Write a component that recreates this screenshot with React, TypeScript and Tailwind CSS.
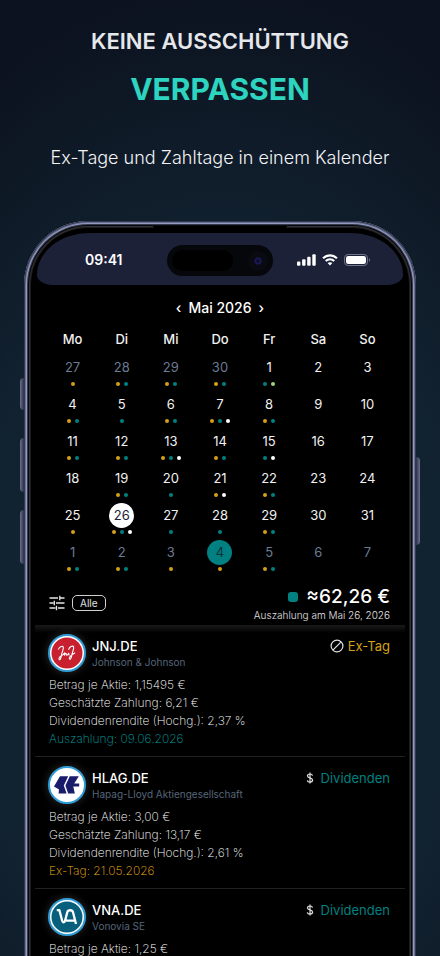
import React from "react";

type Dot = "y" | "t" | "w" | "g";
type Day = { n: number; dots?: string; out?: boolean; mark?: "today" | "pay" };

const dotColor: Record<Dot, string> = {
  y: "bg-[#d4a017]",
  t: "bg-[#008080]",
  w: "bg-white",
  g: "bg-[#a5cf7a]",
};

const weekdays = ["Mo", "Di", "Mi", "Do", "Fr", "Sa", "So"];

const days: Day[] = [
  { n: 27, dots: "y", out: true },
  { n: 28, dots: "yt", out: true },
  { n: 29, dots: "yt", out: true },
  { n: 30, dots: "yt", out: true },
  { n: 1, dots: "tg" },
  { n: 2 },
  { n: 3 },
  { n: 4, dots: "yt" },
  { n: 5, dots: "t" },
  { n: 6, dots: "yt" },
  { n: 7, dots: "ytw" },
  { n: 8, dots: "yt" },
  { n: 9 },
  { n: 10 },
  { n: 11, dots: "yt" },
  { n: 12, dots: "yt" },
  { n: 13, dots: "ytw" },
  { n: 14, dots: "yt" },
  { n: 15, dots: "tw" },
  { n: 16 },
  { n: 17 },
  { n: 18 },
  { n: 19, dots: "yt" },
  { n: 20, dots: "t" },
  { n: 21, dots: "yw" },
  { n: 22, dots: "yt" },
  { n: 23 },
  { n: 24 },
  { n: 25, dots: "y" },
  { n: 26, dots: "ytw", mark: "today" },
  { n: 27, dots: "t" },
  { n: 28, dots: "t" },
  { n: 29, dots: "yt" },
  { n: 30 },
  { n: 31 },
  { n: 1, dots: "yt", out: true },
  { n: 2, dots: "yt", out: true },
  { n: 3, dots: "y", out: true },
  { n: 4, dots: "y", out: true, mark: "pay" },
  { n: 5, dots: "yt", out: true },
  { n: 6, out: true },
  { n: 7, out: true },
];

function dayTone(d: Day) {
  if (d.mark === "today") return "bg-white text-[#1c2138]";
  if (d.mark === "pay") return "bg-[#008080] text-[#10323c]";
  return d.out ? "text-[#6b7c93]" : "text-[#f1f1f1]";
}

function DayCell({ day }: { day: Day }) {
  return (
    <button type="button" className="flex flex-col items-center gap-0.5">
      <span
        className={`flex size-[25px] items-center justify-center rounded-full text-[13px] leading-none ${dayTone(day)}`}
      >
        {day.n}
      </span>
      <span className="flex h-1 gap-1">
        {(day.dots ?? "").split("").map((k, i) => (
          <i key={i} className={`size-1 rounded-full ${dotColor[k as Dot]}`} />
        ))}
      </span>
    </button>
  );
}

function SignalIcon() {
  return (
    <svg width="19" height="12" viewBox="0 0 19 12" fill="#fff" aria-hidden="true">
      <rect x="0" y="7.5" width="3.4" height="4.2" rx="1" />
      <rect x="5.1" y="5.2" width="3.4" height="6.5" rx="1" />
      <rect x="10.2" y="2.8" width="3.4" height="8.9" rx="1" />
      <rect x="15.3" y="0.2" width="3.4" height="11.5" rx="1" />
    </svg>
  );
}

function WifiIcon() {
  return (
    <svg width="16" height="12" viewBox="0 0 16 12" fill="none" stroke="#fff" aria-hidden="true">
      <path d="M1 4.2C5 .4 11 .4 15 4.2" strokeWidth="2.1" />
      <path d="M3.7 7C6.2 4.8 9.8 4.8 12.3 7" strokeWidth="2" />
      <path d="M8 11.6 5.6 9.1C7 7.9 9 7.9 10.4 9.1Z" fill="#fff" stroke="none" />
    </svg>
  );
}

function BatteryIcon() {
  return (
    <svg width="27" height="12" viewBox="0 0 27 12" fill="none" aria-hidden="true">
      <rect x=".5" y=".5" width="23" height="11" rx="3.6" stroke="#73778a" />
      <rect x="2" y="2" width="20" height="8" rx="2.3" fill="#fff" />
      <path d="M25 4.2c1.4.5 1.4 3.1 0 3.6Z" fill="#73778a" />
    </svg>
  );
}

function TuneIcon() {
  return (
    <svg width="16" height="16" viewBox="0 0 16 16" stroke="#e6e6e6" strokeWidth="1.3" aria-hidden="true">
      <path d="M.5 3H9M11 3h4.5M10.8.7v4.6M.5 8h4M7 8h8.5M5.3 5.7v4.6M.5 13h6M9 13h6.5M7.5 10.7v4.6" />
    </svg>
  );
}

function JnjLogo() {
  return (
    <svg viewBox="0 0 34 34" className="size-full" aria-hidden="true">
      <circle cx="17" cy="17" r="15.5" fill="#c9202f" />
      <g fill="none" stroke="#fff" strokeWidth="1.1" strokeLinecap="round" strokeLinejoin="round">
        <path d="M8.6 13.2C9 10.8 12.4 9.6 13.3 11c.8 1.6-1.6 5.5-1.9 8.4-.2 2.4-1.3 5-2.2 4.2-1-1 .8-3.6 4.5-5.4" />
        <path d="M13.6 18.4c.5-1.5 1.4-2.4 1.2-.8l-.3 1.6c.5-1.3 1.7-2.5 1.8-1.2.1 1.5.7 1.7 1.5.5l.9-1.2.4 1.7" />
        <path d="M18.8 13.4c.4-2.6 4-4.2 4.8-2.6.7 1.8-1.5 5.6-1.8 8.2-.3 2.6-1.4 4.9-2.3 4.1-1-1 .9-3.6 5.2-6" />
      </g>
    </svg>
  );
}

function HapagLogo() {
  return (
    <svg viewBox="0 0 34 34" className="size-full" aria-hidden="true">
      <path d="M10 8.2h8.2L13.8 17.500 16.600 25.500H8.600L9 21.500 4 18.500Z" fill="#181c6b" />
      <path d="M19.800 8.200H28.800L24.200 15.600H29.200V18.400H23.300L24.800 25.500H18.200L15.400 17.500Z" fill="#181c6b" />
    </svg>
  );
}

function VonoviaLogo() {
  return (
    <svg viewBox="0 0 34 34" className="size-full" aria-hidden="true">
      <circle cx="17" cy="17" r="15.5" fill="#075f7b" />
      <path
        d="M6.8 10.2h2.6l2.7 10.3c.6 2.3 2.4 2.3 3 .1l2.2-8.4c.7-2.6 5-2.6 5.7 0L26 24M16.2 20.7h8.6"
        fill="none"
        stroke="#fff"
        strokeWidth="2.3"
        strokeLinejoin="round"
      />
    </svg>
  );
}

function BanIcon() {
  return (
    <svg width="14" height="14" viewBox="0 0 14 14" fill="none" stroke="#e0e0e0" strokeWidth="1.2" aria-hidden="true">
      <circle cx="7" cy="7" r="5.9" />
      <path d="M2.9 11.1 11.1 2.9" />
    </svg>
  );
}

function DollarIcon() {
  return (
    <svg width="8" height="14" viewBox="0 0 8 14" fill="none" stroke="#e0e0e0" strokeWidth="1.2" aria-hidden="true">
      <path d="M4 1.5v11M6.5 4.7C6.3 3.6 5.4 3 4 3S1.5 3.7 1.5 4.9C1.5 7.3 6.6 6.5 6.6 9.1c0 1.3-1.1 2-2.6 2S1.5 10.5 1.3 9.3" />
    </svg>
  );
}

type Item = {
  ticker: string;
  company: string;
  logo: React.ReactNode;
  kind: "ex" | "div";
  lines: string[];
  date?: string;
};

const items: Item[] = [
  {
    ticker: "JNJ.DE",
    company: "Johnson & Johnson",
    logo: <JnjLogo />,
    kind: "ex",
    lines: ["Betrag je Aktie: 1,15495 €", "Geschätzte Zahlung: 6,21 €", "Dividendenrendite (Hochg.): 2,37 %"],
    date: "Auszahlung: 09.06.2026",
  },
  {
    ticker: "HLAG.DE",
    company: "Hapag-Lloyd Aktiengesellschaft",
    logo: <HapagLogo />,
    kind: "div",
    lines: ["Betrag je Aktie: 3,00 €", "Geschätzte Zahlung: 13,17 €", "Dividendenrendite (Hochg.): 2,61 %"],
    date: "Ex-Tag: 21.05.2026",
  },
  {
    ticker: "VNA.DE",
    company: "Vonovia SE",
    logo: <VonoviaLogo />,
    kind: "div",
    lines: ["Betrag je Aktie: 1,25 €"],
  },
];

function PayoutItem({ item }: { item: Item }) {
  const ex = item.kind === "ex";
  return (
    <li className="border-b border-[#202020] pt-[9px] pr-[15px] pb-2 pl-[14px]">
      <div className="flex items-start">
        <div className="-ml-px flex size-[38px] shrink-0 items-center justify-center rounded-full border-2 border-[#2f9bd6] bg-white shadow-[0_0_8px_#ffffff30]">
          {item.logo}
        </div>
        <div className="ml-1.5 flex-1 pt-0.5">
          <h2 className="text-[13px] leading-5 font-medium text-white">{item.ticker}</h2>
          <p className="text-[10px] leading-3 text-[#56657a]">{item.company}</p>
        </div>
        <p
          className={`flex items-center pt-0.5 text-[13px] leading-5 ${ex ? "gap-1 text-[#d4a017]" : "gap-[7px] text-[#008080]"}`}
        >
          {ex ? <BanIcon /> : <DollarIcon />}
          {ex ? "Ex-Tag" : "Dividenden"}
        </p>
      </div>
      <div className="mt-1 text-[12px] leading-[18px] font-extralight text-white">
        {item.lines.map((line) => (
          <p key={line}>{line}</p>
        ))}
        {item.date && <p className={ex ? "text-[#00a0a0]" : "text-[#f0b41a]"}>{item.date}</p>}
      </div>
    </li>
  );
}

function StatusBar() {
  return (
    <div className="relative mx-0.5 flex h-[52px] items-center justify-between rounded-[52px_52px_16px_16px/42px_42px_10px_10px] bg-[#1c2138] pt-0.5 pr-8 pl-12">
      <span className="text-[14px] leading-5 font-semibold text-white">09:41</span>
      <div className="absolute top-3 left-1/2 flex h-[31px] w-[106px] -translate-x-1/2 items-center justify-between rounded-full bg-[#06070b] px-[5px]">
        <span className="h-[21px] w-[61px] rounded-full bg-black" />
        <span className="flex size-5 items-center justify-center rounded-full bg-[#090a12]">
          <span className="size-2 rounded-full bg-[radial-gradient(circle,#0c0c2c_20%,#1a1c60_50%,#0a0a18_75%)]" />
        </span>
      </div>
      <div className="flex items-center gap-1.5">
        <SignalIcon />
        <WifiIcon />
        <BatteryIcon />
      </div>
    </div>
  );
}

export default function App() {
  return (
    <main className="flex h-dvh flex-col overflow-hidden bg-[radial-gradient(ellipse_100%_68%_at_50%_66%,#122a36_0%,#11212f_60%,#0c121f_100%)] font-['Inter','Liberation_Sans',sans-serif]">
      <header className="pt-[27px] text-center">
        <h1>
          <span className="block text-[22px] leading-7 font-semibold text-[#e5e7eb]">KEINE AUSSCHÜTTUNG</span>
          <span className="mt-3.5 block text-[30px] leading-10 font-bold text-[#2dd4bf]">VERPASSEN</span>
        </h1>
        <p className="mt-[37px] text-[18px] leading-6 font-light text-[#f3f4f6]">
          Ex-Tage und Zahltage in einem Kalender
        </p>
      </header>

      <section className="relative mx-6 mt-[51px] shrink-0">
        <span className="absolute top-[157px] -left-1 h-8 w-1 rounded-l-sm bg-linear-to-r from-[#6c7191] to-[#2c3048]" />
        <span className="absolute top-[217px] -left-1 h-[54px] w-1 rounded-l-sm bg-linear-to-r from-[#6c7191] to-[#2c3048]" />
        <span className="absolute top-[289px] -left-1 h-[54px] w-1 rounded-l-sm bg-linear-to-r from-[#6c7191] to-[#2c3048]" />
        <span className="absolute top-[236px] -right-1 h-[88px] w-1 rounded-r-sm bg-linear-to-l from-[#6c7191] to-[#2c3048]" />

        <div className="relative rounded-t-[64px] bg-black px-[11px] pt-3 shadow-[inset_0_0_0_1px_#33384f,inset_0_0_0_2px_#697091,inset_0_0_0_3px_#929bc0,inset_0_0_0_4px_#34384c,inset_0_0_0_5px_#0a0a0c,inset_0_0_0_6px_#303136,inset_0_0_0_7px_#1c1c1e]">
          <span className="absolute top-[5px] left-1/2 h-0.5 w-[134px] -translate-x-1/2 rounded-b-full bg-black" />
          <StatusBar />

          <div className="px-[13px]">
            <div className="mt-[11px] flex h-6 items-center justify-center gap-[7px] text-[14px] leading-6 font-medium text-white">
              <button type="button" aria-label="Vorheriger Monat">‹</button>
              <span>Mai 2026</span>
              <button type="button" aria-label="Nächster Monat">›</button>
            </div>
            <div className="mt-2.5 grid grid-cols-7 text-center text-[13px] leading-[18px] font-medium text-[#f1f1f1]">
              {weekdays.map((w) => (
                <span key={w}>{w}</span>
              ))}
            </div>
            <div className="mt-[7px] grid grid-cols-7 gap-y-1.5">
              {days.map((d, i) => (
                <DayCell key={i} day={d} />
              ))}
            </div>
          </div>

          <div className="mt-3.5 flex items-center justify-between pr-[15px] pb-[3px] pl-[14px]">
            <div className="flex items-center gap-[7px] pb-0.5">
              <button type="button" aria-label="Filter">
                <TuneIcon />
              </button>
              <button
                type="button"
                className="h-4 rounded-[5px] border border-[#d0d0d0] px-[7px] text-[10px] leading-3 text-[#e0e0e0]"
              >
                Alle
              </button>
            </div>
            <div className="text-right">
              <p className="flex items-center justify-end gap-2 text-[19px] leading-6 font-medium text-white">
                <i className="size-2.5 rounded-[3px] bg-[#008080]" />
                ≈62,26 €
              </p>
              <p className="text-[10px] leading-[13px] font-light text-[#e0e0e0]">Auszahlung am Mai 26, 2026</p>
            </div>
          </div>

          <ul className="bg-[linear-gradient(#191919,#000_8px)]">
            {items.map((item) => (
              <PayoutItem key={item.ticker} item={item} />
            ))}
          </ul>
        </div>
      </section>
    </main>
  );
}
